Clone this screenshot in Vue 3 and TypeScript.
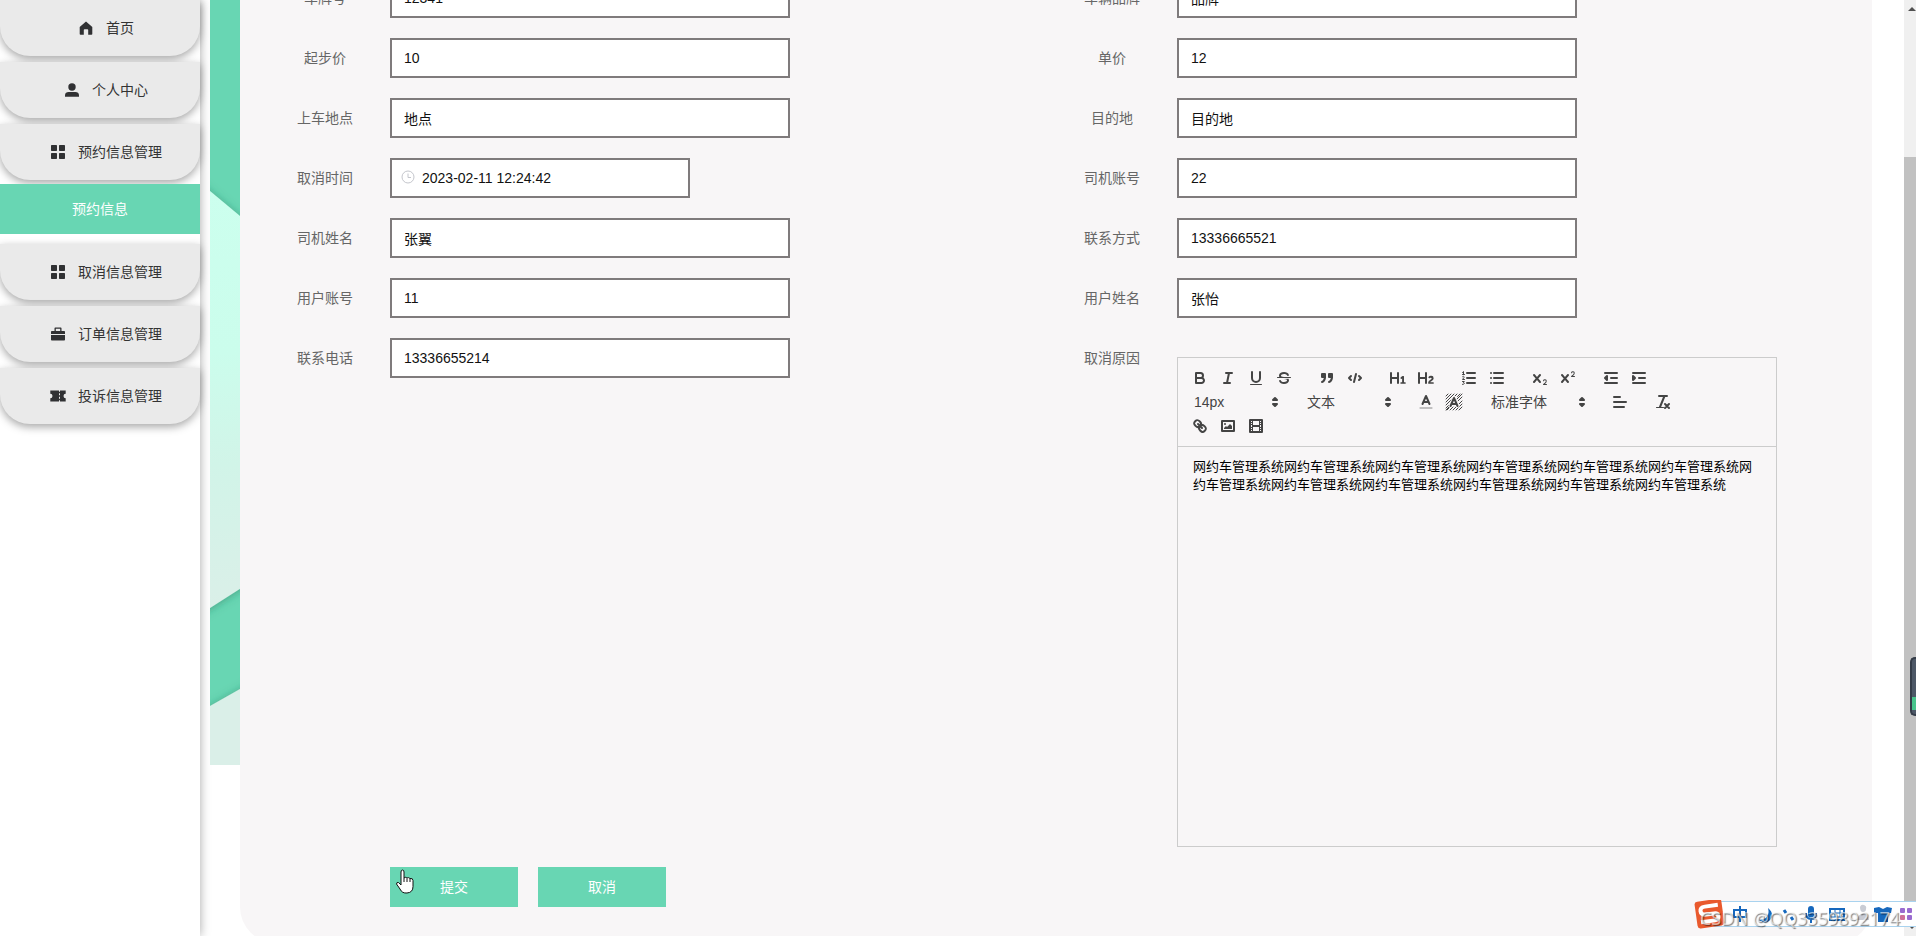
<script setup lang="ts">
import { ref } from 'vue'

interface MenuItem {
  title: string
  icon: 'home' | 'user' | 'grid' | 'case' | 'ticket'
  children?: string[]
}

interface Field {
  key: string
  label: string
  value: string
  kind?: 'date' | 'editor'
}

const menu: MenuItem[] = [
  { title: '首页', icon: 'home' },
  { title: '个人中心', icon: 'user' },
  { title: '预约信息管理', icon: 'grid', children: ['预约信息'] },
  { title: '取消信息管理', icon: 'grid' },
  { title: '订单信息管理', icon: 'case' },
  { title: '投诉信息管理', icon: 'ticket' },
]

const fields = ref<Field[]>([
  { key: 'plate', label: '车牌号', value: '12341' },
  { key: 'brand', label: '车辆品牌', value: '品牌' },
  { key: 'base', label: '起步价', value: '10' },
  { key: 'unit', label: '单价', value: '12' },
  { key: 'from', label: '上车地点', value: '地点' },
  { key: 'to', label: '目的地', value: '目的地' },
  { key: 'time', label: '取消时间', value: '2023-02-11 12:24:42', kind: 'date' },
  { key: 'driverNo', label: '司机账号', value: '22' },
  { key: 'driver', label: '司机姓名', value: '张翼' },
  { key: 'contact', label: '联系方式', value: '13336665521' },
  { key: 'userNo', label: '用户账号', value: '11' },
  { key: 'user', label: '用户姓名', value: '张怡' },
  { key: 'phone', label: '联系电话', value: '13336655214' },
  { key: 'reason', label: '取消原因', value: '网约车管理系统'.repeat(12), kind: 'editor' },
])

interface Tool {
  name: string
  svg?: string
  options?: string
  wide?: boolean
}

// Toolbar glyphs on an 18 x 18 grid; s = stroked, f = filled
const toolbar: Tool[][] = [
  [
    { name: '加粗', svg: '<path class="s" d="M5,4H9.5A2.5,2.5,0,0,1,12,6.5v0A2.5,2.5,0,0,1,9.5,9H5A0,0,0,0,1,5,9V4A0,0,0,0,1,5,4Z"/><path class="s" d="M5,9h5.5A2.5,2.5,0,0,1,13,11.5v0A2.5,2.5,0,0,1,10.5,14H5a0,0,0,0,1,0,0V9A0,0,0,0,1,5,9Z"/>' },
    { name: '斜体', svg: '<path class="s" d="M7 4H13M5 14H11M8 14L10 4"/>' },
    { name: '下划线', svg: '<path class="s" d="M5,3V9a4.012,4.012,0,0,0,4,4H9a4.012,4.012,0,0,0,4-4V3"/><rect class="f" height="1" rx="0.5" ry="0.5" width="12" x="3" y="15"/>' },
    { name: '删除线', svg: '<path class="s t" d="M15.5 8.5H2.5"/><path class="f" d="M9.007,8C6.542,7.791,6,7.519,6,6.5,6,5.792,7.283,5,9,5c1.571,0,2.765.679,2.969,1.309a1,1,0,0,0,1.9-.617C13.356,4.106,11.354,3,9,3,6.2,3,4,4.538,4,6.5a3.2,3.2,0,0,0,.5,1.843Z"/><path class="f" d="M8.984,10C11.457,10.208,12,10.479,12,11.5c0,0.708-1.283,1.5-3,1.5-1.571,0-2.765-.679-2.969-1.309a1,1,0,1,0-1.9.617C4.644,13.894,6.646,15,9,15c2.8,0,5-1.538,5-3.5a3.2,3.2,0,0,0-.5-1.843Z"/>' },
  ],
  [
    { name: '引用', svg: '<path class="f s" d="M4 5h3v3H4zM11 5h3v3h-3z"/><path class="f s" d="M7,8c0,4.031-3,5-3,5M14,8c0,4.031-3,5-3,5"/>' },
    { name: '代码', svg: '<path class="s" d="M5 7L3 9L5 11M13 7L15 9L13 11M10 5L8 13"/>' },
  ],
  [
    { name: '一级标题', svg: '<path class="f" d="M10,4V14a1,1,0,0,1-2,0V10H3v4a1,1,0,0,1-2,0V4A1,1,0,0,1,3,4V8H8V4a1,1,0,0,1,2,0Zm6.06787,9.209H14.98975V7.59863a.54085.54085,0,0,0-.605-.60547h-.62744a1.01119,1.01119,0,0,0-.748.29688L11.645,8.56641a.5435.5435,0,0,0-.022.8584l.28613.30762a.53861.53861,0,0,0,.84717.0332l.09912-.08789a1.2137,1.2137,0,0,0,.2417-.35254h.02246s-.01123.30859-.01123.60547V13.209H12.041a.54085.54085,0,0,0-.605.60547v.43945a.54085.54085,0,0,0,.605.60547h4.02686a.54085.54085,0,0,0,.605-.60547v-.43945A.54085.54085,0,0,0,16.06787,13.209Z"/>' },
    { name: '二级标题', svg: '<path class="f" d="M16.73975,13.81445v.43945a.54085.54085,0,0,1-.605.60547H11.855a.58392.58392,0,0,1-.64893-.60547V14.0127c0-2.90527,3.39941-3.42187,3.39941-4.55469a.77675.77675,0,0,0-.84717-.78125,1.17684,1.17684,0,0,0-.83594.38477c-.2749.26367-.561.374-.85791.13184l-.4292-.34082c-.30811-.24219-.38525-.51758-.1543-.81445a2.97155,2.97155,0,0,1,2.45361-1.17676,2.45393,2.45393,0,0,1,2.68408,2.40918c0,2.45312-3.1792,2.92676-3.27832,3.93848h2.79443A.54085.54085,0,0,1,16.73975,13.81445ZM9,3A.99974.99974,0,0,0,8,4V8H3V4A1,1,0,0,0,1,4V14a1,1,0,0,0,2,0V10H8v4a1,1,0,0,0,2,0V4A.99974.99974,0,0,0,9,3Z"/>' },
  ],
  [
    { name: '有序列表', svg: '<path class="s" d="M7 4H15M7 9H15M7 14H15"/><path class="s h" d="M2.5 5.5H4.5M2.5 3.5L3.5 2.5V5.5M2.5 7.7c1-1 2.2 0 1.4.9L2.5 10.5h2M2.5 12.5h1.8l-.9 1.1c1.5 0 1.4 1.9-.9 1.8"/>' },
    { name: '无序列表', svg: '<path class="s" d="M6 4H15M6 9H15M6 14H15M3 4H3.01M3 9H3.01M3 14H3.01"/>' },
  ],
  [
    { name: '下标', svg: '<path class="f" d="M15.5,15H13.861a3.858,3.858,0,0,0,1.914-2.975,1.8,1.8,0,0,0-1.6-1.751A1.921,1.921,0,0,0,12.021,11.7a.50013.50013,0,1,0,.957.291h0a.914.914,0,0,1,1.053-.725.81.81,0,0,1,.744.762c0,1.076-1.16971,1.86982-1.93971,2.43082A1.45639,1.45639,0,0,0,12,15.5a.5.5,0,0,0,.5.5h3A.5.5,0,0,0,15.5,15Z"/><path class="f" d="M9.65,5.241a1,1,0,0,0-1.409.108L6,7.964,3.759,5.349A1,1,0,0,0,2.192,6.59178Q2.21541,6.6213,2.241,6.649L4.684,9.5,2.241,12.35A1,1,0,0,0,3.71,13.70722q.02557-.02768.049-.05722L6,11.036,8.241,13.65a1,1,0,1,0,1.567-1.24277Q9.78459,12.3777,9.759,12.35L7.316,9.5,9.759,6.651A1,1,0,0,0,9.65,5.241Z"/>' },
    { name: '上标', svg: '<path class="f" d="M15.5,7H13.861a4.015,4.015,0,0,0,1.914-2.975,1.8,1.8,0,0,0-1.6-1.751A1.922,1.922,0,0,0,12.021,3.7a.5.5,0,1,0,.957.291.917.917,0,0,1,1.053-.725.81.81,0,0,1,.744.762c0,1.077-1.164,1.925-1.934,2.486A1.423,1.423,0,0,0,12,7.5a.5.5,0,0,0,.5.5h3A.5.5,0,0,0,15.5,7Z"/><path class="f" d="M9.651,5.241a1,1,0,0,0-1.41.108L6,7.964,3.759,5.349a1,1,0,1,0-1.519,1.3L4.683,9.5,2.241,12.35a1,1,0,1,0,1.519,1.3L6,11.036,8.241,13.65a1,1,0,0,0,1.519-1.3L7.317,9.5,9.759,6.651A1,1,0,0,0,9.651,5.241Z"/>' },
  ],
  [
    { name: '减少缩进', svg: '<path class="s" d="M3 14H15M3 4H15M9 9H15"/><path class="s f" d="M5 7V11L3 9Z"/>' },
    { name: '增加缩进', svg: '<path class="s" d="M3 14H15M3 4H15M9 9H15"/><path class="s f" d="M3 7V11L5 9Z"/>' },
  ],
  [{ name: '字号', options: '14px' }],
  [{ name: '段落', options: '文本' }],
  [
    { name: '字体颜色', svg: '<path class="s h c" d="M3 15H15"/><path class="s" d="M5.5 11L9 3L12.5 11M11.63 9H6.38"/>' },
    { name: '背景颜色', svg: '<path class="s h" d="M1 3L3 1M1 6L6 1M1 9L9 1M1 12L12 1M1 15L5.500 10.500M12.500 3.500L15 1M1 17L17 1M2 17L5 14M5 17L8 14M8 17L17 8M11 17L17 11M14 17L17 14M13 8L17 4"/><path class="s k" d="M5.5 13L9 5L12.5 13M11.63 11H6.38"/><path class="s" d="M5.500 13L9 5L12.500 13M11.630 11H6.380"/>' },
  ],
  [{ name: '字体', options: '标准字体', wide: true }],
  [{ name: '对齐', svg: '<path class="s" d="M3 9H15M3 14H13M3 4H9"/>' }],
  [{ name: '清除格式', svg: '<path class="s" d="M5 3H13M6 14L10.500 3M11 11L15 15M15 11L11 15"/><path class="s h" d="M2.500 14.500H9.500"/>' }],
  [
    { name: '链接', svg: '<path class="s" d="M7 7L11 11M8.900 4.577a3.476 3.476 0 0 1 .36 4.679A3.476 3.476 0 0 1 4.577 8.900C3.185 7.500 2.035 6.400 4.217 4.217S7.500 3.185 8.900 4.577ZM13.423 9.100a3.476 3.476 0 0 0-4.679-.36 3.476 3.476 0 0 0 .36 4.679c1.392 1.392 2.500 2.542 4.679.36S14.815 10.500 13.423 9.100Z"/>' },
    { name: '图片', svg: '<rect class="s" height="10" width="12" x="3" y="4"/><circle class="f" cx="6" cy="7" r="1"/><path class="s f e" d="M5 12V11L7 9L8 10L11 7L13 9V12Z"/>' },
    { name: '视频', svg: '<rect class="s" height="12" width="12" x="3" y="3"/><path class="f" d="M5 3h1v12H5zM12 3h1v12h-1zM5 8h8v2H5zM3 5h3v1H3zM3 7h3v1H3zM3 10h3v1H3zM3 12h3v1H3zM12 5h3v1h-3zM12 7h3v1h-3zM12 10h3v1h-3zM12 12h3v1h-3z"/>' },
  ],
]
</script>

<template>
  <div class="page">
    <nav class="sidebar">
      <div v-for="item in menu" :key="item.title" class="group">
        <a href="#" class="item">
          <svg class="icon" viewBox="0 0 14 14" aria-hidden="true">
            <path v-if="item.icon === 'home'" d="M7 .5 13.300 6v7a.8.800 0 0 1-.8.800H9.200V9a.8.800 0 0 0-.8-.8H5.600a.8.800 0 0 0-.8.800v4.800H1.500a.8.800 0 0 1-.8-.8V6z" />
            <template v-else-if="item.icon === 'user'">
              <circle cx="7" cy="4" r="3.700" />
              <path d="M0 13.800v-1.600C0 10 1.600 9 3.600 9h6.800c2 0 3.600 1 3.600 3.200v1.600z" />
            </template>
            <path v-else-if="item.icon === 'grid'" d="M.7 0h4.600q.7 0 .7.700v4.600q0 .7-.7.700H.7Q0 6 0 5.300V.7Q0 0 .7 0zM8.700 0h4.600q.7 0 .7.700v4.600q0 .7-.7.700H8.700Q8 6 8 5.300V.7Q8 0 8.700 0zM.7 8h4.600q.7 0 .7.700v4.600q0 .7-.7.700H.7Q0 14 0 13.300V8.700Q0 8 .7 8zM8.700 8h4.600q.7 0 .7.700v4.600q0 .7-.7.700H8.700Q8 14 8 13.300V8.700Q8 8 8.700 8z" />
            <path v-else-if="item.icon === 'case'" d="M3.500 4V1.300q0-.8.8-.8h5.400q.8 0 .8.800V4h2.700q.8 0 .8.800V7H0V4.800Q0 4 .8 4zM4.800 4h4.400V1.700H4.800zM0 8h14v4.700q0 .8-.8.800H.8q-.8 0-.8-.8z" />
            <path v-else fill-rule="evenodd" d="M-.7 1.500H8v1.200h1V1.500h5.700v3.300a2.200 2.200 0 0 0 0 4.400v3.300H9v-1.200H8v1.200H-.7V9.200a2.200 2.200 0 0 0 0-4.400zM8 4.300v2h1v-2zM8 7.700v2h1v-2z" />
          </svg>
          <span>{{ item.title }}</span>
        </a>
        <a v-for="child in item.children" :key="child" href="#" class="child">{{ child }}</a>
      </div>
    </nav>

    <main class="main">
      <svg class="backdrop" viewBox="0 0 30 765" aria-hidden="true">
        <defs>
          <linearGradient id="mint" x1="0" y1="0" x2="0" y2="1">
            <stop offset="0" stop-color="#ccffee" />
            <stop offset="0.4" stop-color="#cbfdec" />
            <stop offset="0.650" stop-color="#d1f4e8" />
            <stop offset="1" stop-color="#dbefe8" />
          </linearGradient>
          <filter id="soft" x="-50%" y="-10%" width="200%" height="120%">
            <feDropShadow dx="0" dy="1" stdDeviation="4" flood-color="#1f6f57" flood-opacity="0.500" />
          </filter>
        </defs>
        <rect width="30" height="765" fill="#68d6b3" />
        <path d="M-20 174 0 191 30 216 50 233V576L0 608-20 620Z" fill="url(#mint)" filter="url(#soft)" />
        <path d="M-20 717 0 706 30 689 50 678V790H-20Z" fill="#daefe8" filter="url(#soft)" />
      </svg>

      <form class="panel" @submit.prevent>
        <div class="fields">
          <div v-for="f in fields" :key="f.key" class="field">
            <label :for="f.key">{{ f.label }}</label>
            <div v-if="f.kind === 'editor'" class="editor">
              <div class="toolbar">
                <div v-for="(group, i) in toolbar" :key="i" class="tools">
                  <template v-for="tool in group" :key="tool.name">
                    <span v-if="tool.options" class="picker" :class="{ wide: tool.wide }">
                      <select :aria-label="tool.name"><option>{{ tool.options }}</option></select>
                      <svg viewBox="0 0 18 18" aria-hidden="true"><path class="s f" d="M7 11L9 13L11 11ZM7 7L9 5L11 7Z" /></svg>
                    </span>
                    <button v-else type="button" class="tool" :aria-label="tool.name">
                      <svg viewBox="0 0 18 18" aria-hidden="true" v-html="tool.svg"></svg>
                    </button>
                  </template>
                </div>
              </div>
              <textarea :id="f.key" v-model="f.value" spellcheck="false"></textarea>
            </div>
            <div v-else class="control" :class="f.kind">
              <svg v-if="f.kind === 'date'" class="clock" viewBox="0 0 14 14" aria-hidden="true">
                <circle cx="7" cy="7" r="6" /><path d="M7 3.500V7.500H10" />
              </svg>
              <input :id="f.key" v-model="f.value" type="text" autocomplete="off" />
            </div>
          </div>
        </div>
        <div class="actions">
          <button type="submit">提交</button>
          <button type="button">取消</button>
        </div>
      </form>
    </main>

    <div class="scrollbar" aria-hidden="true">
      <svg class="arrow" viewBox="0 0 12 18"><path d="M4 11H12L8 7Z" /></svg>
      <div class="thumb"></div>
      <svg class="arrow" viewBox="0 0 12 18"><path d="M4 7H12L8 11Z" /></svg>
    </div>

    <div class="meter" aria-hidden="true"></div>

    <div class="ime" aria-hidden="true">
      <svg viewBox="0 0 222 36">
        <rect x="20" y="1.500" width="210" height="25" fill="#fff" stroke="#a9d3ef" />
        <g transform="rotate(-8 16 14)">
          <rect x="2" y="0" width="27" height="27" rx="3" fill="#e9592d" />
          <path d="M25 6H12q-5 0-5 4t5 4h8q4 0 4 3.500T20 21H6" fill="none" stroke="#fff" stroke-width="4" />
        </g>
        <g fill="none" stroke="#1768bd" stroke-width="2">
          <path d="M40 10h12v7H40zM46 6v16" />
          <path d="M97 17l2 3M90 10l2 3" stroke-width="3" />
          <path d="M112 13q0 6 5 6t5-6M117 18v5" />
          <rect x="136" y="9" width="14" height="11" />
          <path d="M136 13h14M136 17h14M141 9v8M146 9v8" stroke-width="1" />
        </g>
        <path d="M74 8q3 12-10 12 10 6 14-3 1-5-4-9zM114 9a3 3 0 0 1 6 0v6a3 3 0 0 1-6 0zM180 8l5-1 4 2 4-2 5 1-1 5h-3v9h-10v-9h-4z" fill="#1768bd" />
        <path d="M166 7a3 3 0 0 1 6 2q0 3-3 3t-3-5zM163 20q1-6 6-6t6 6z" fill="#c9ccd4" />
        <g fill="#9a6bd0">
          <rect x="206" y="8" width="5" height="5" rx="1" /><rect x="213" y="8" width="5" height="5" rx="1" />
          <rect x="206" y="15" width="5" height="5" rx="1" fill="#d0719a" /><rect x="213" y="15" width="5" height="5" rx="1" />
        </g>
      </svg>
      <span>CSDN @QQ3359892174</span>
    </div>

    <svg class="pointer" viewBox="0 0 20 26" aria-hidden="true">
      <path d="M6 14V3q0-2 1.500-2T9 3v6q1-1.500 3 0 1.500-1 3 .5 3-.5 3 2v6q0 6-6 6.500-5 .5-7-4L1.500 15q0-2 2-1.500L6 16z" />
      <path d="M9 9v4M12 9.500V13M15 10v3" />
    </svg>
  </div>
</template>

<style>
body {
  margin: 0;
  overflow: hidden;
}
</style>

<style scoped>
.page {
  position: relative;
  display: flex;
  height: 100vh;
  overflow: hidden;
  background: #fff;
  font-family: 'Liberation Sans', 'Noto Sans CJK SC', sans-serif;
  font-size: 14px;
}
a {
  color: inherit;
  text-decoration: none;
}
.sidebar {
  flex: none;
  width: 200px;
  box-shadow: 0 0 10px rgba(0, 0, 0, 0.35);
  background: #fff;
}
.group {
  margin-bottom: 6px;
}
.item {
  display: flex;
  align-items: center;
  justify-content: center;
  gap: 13px;
  height: 56px;
  padding-left: 13px;
  box-sizing: border-box;
  border-radius: 0 0 30px 30px;
  background: #eaeaea;
  box-shadow: 0 3px 8px rgba(0, 0, 0, 0.35);
  color: #333;
}
.item span {
  padding-bottom: 2px;
}
.icon {
  width: 14px;
  height: 14px;
  fill: #303133;
  overflow: visible;
}
.child {
  position: relative;
  display: block;
  margin: 4px 0 10px;
  line-height: 50px;
  text-align: center;
  color: #fff;
  background: #68d6b3;
}
.main {
  display: flex;
  flex: 1;
  align-items: flex-start;
  min-width: 0;
  padding: 0 32px 0 10px;
}
.backdrop {
  flex: none;
  width: 30px;
}
.panel {
  flex: 1;
  min-width: 0;
  margin-top: -22px;
  padding: 0 28px 36px 30px;
  border-radius: 0 0 36px 36px;
  background: #f8f6f7;
}
.fields {
  display: grid;
  grid-template-columns: 1fr 1fr;
  row-gap: 20px;
}
.field {
  display: flex;
  align-items: flex-start;
}
.field label {
  flex: none;
  width: 110px;
  margin-right: 10px;
  line-height: 40px;
  text-align: center;
  color: #666;
}
.control {
  position: relative;
  width: 400px;
}
.control.date {
  width: 300px;
}
input {
  display: block;
  width: 100%;
  height: 40px;
  box-sizing: border-box;
  padding: 0 12px;
  border: 2px solid #7f7b7c;
  border-radius: 0;
  outline: 0;
  background: #fff;
  color: #111;
  font: inherit;
}
.date input {
  padding-left: 30px;
}
.clock {
  position: absolute;
  left: 11px;
  top: 12px;
  width: 14px;
  height: 14px;
  fill: none;
  stroke: #c4c6cc;
}
.editor {
  width: 600px;
  margin-top: 19px;
  box-sizing: border-box;
  border: 1px solid #ccc;
}
.toolbar {
  display: flex;
  flex-wrap: wrap;
  padding: 8px;
  border-bottom: 1px solid #ccc;
}
.tools {
  display: flex;
  margin-right: 15px;
}
.tool {
  width: 28px;
  height: 24px;
  padding: 3px 5px;
  border: 0;
  background: none;
}
.tool svg,
.picker svg {
  display: block;
  width: 18px;
  height: 18px;
}
.picker {
  position: relative;
  width: 98px;
  height: 24px;
}
.picker.wide {
  width: 108px;
}
.picker select {
  width: 100%;
  height: 24px;
  padding: 0 0 0 8px;
  border: 0;
  appearance: none;
  background: none;
  color: #444;
  font: inherit;
}
.picker svg {
  position: absolute;
  right: 0;
  top: 3px;
  pointer-events: none;
}
.toolbar :deep(.s) {
  fill: none;
  stroke: #444;
  stroke-width: 2;
  stroke-linecap: round;
  stroke-linejoin: round;
}
.toolbar :deep(.f) {
  fill: #444;
}
.toolbar :deep(.s.h),
.toolbar :deep(.s.t) {
  stroke-width: 1;
}
.toolbar :deep(.s.c) {
  stroke: #888;
}
.toolbar :deep(.s.k) {
  stroke: #f8f6f7;
  stroke-width: 4;
}
.toolbar :deep(.s.e) {
  stroke: none;
}
textarea {
  display: block;
  width: 100%;
  height: 399px;
  box-sizing: border-box;
  padding: 11px 15px;
  border: 0;
  outline: 0;
  resize: none;
  background: none;
  color: #000;
  font: inherit;
  font-size: 13px;
  line-height: 18px;
}
.actions {
  display: flex;
  gap: 20px;
  margin: 20px 0 0 120px;
}
.actions button {
  width: 128px;
  height: 40px;
  padding: 0 0 2px;
  border: 0;
  background: #68d6b3;
  color: #fff;
  font: inherit;
}
.scrollbar {
  display: flex;
  flex: none;
  flex-direction: column;
  width: 12px;
  background: #f0f0f0;
}
.arrow {
  flex: none;
  width: 12px;
  height: 18px;
  fill: #505050;
}
.thumb {
  flex: 1;
  margin-top: 139px;
  background: #c1c1c1;
}
.meter {
  position: absolute;
  right: 0;
  top: 657px;
  width: 6px;
  height: 59px;
  box-sizing: border-box;
  border: 2px solid #343c48;
  border-right: 0;
  border-radius: 5px 0 0 5px;
  background: linear-gradient(#4d5867 70%, #48c48c 70%, #48c48c 92%, #4d5867 92%);
}
.ime {
  position: absolute;
  right: 0;
  bottom: 0;
  width: 222px;
  height: 36px;
}
.ime svg {
  display: block;
  width: 222px;
  height: 36px;
}
.ime span {
  position: absolute;
  right: 16px;
  bottom: 6px;
  font-family: 'Noto Sans', sans-serif;
  font-size: 18px;
  line-height: 24px;
  color: rgba(255, 255, 255, 0.6);
  text-shadow: 1px 1px 1px rgba(0, 0, 0, 0.5);
  white-space: nowrap;
}
.pointer {
  position: absolute;
  left: 395px;
  top: 869px;
  width: 20px;
  height: 26px;
  fill: #fff;
  stroke: #111;
}
</style>
